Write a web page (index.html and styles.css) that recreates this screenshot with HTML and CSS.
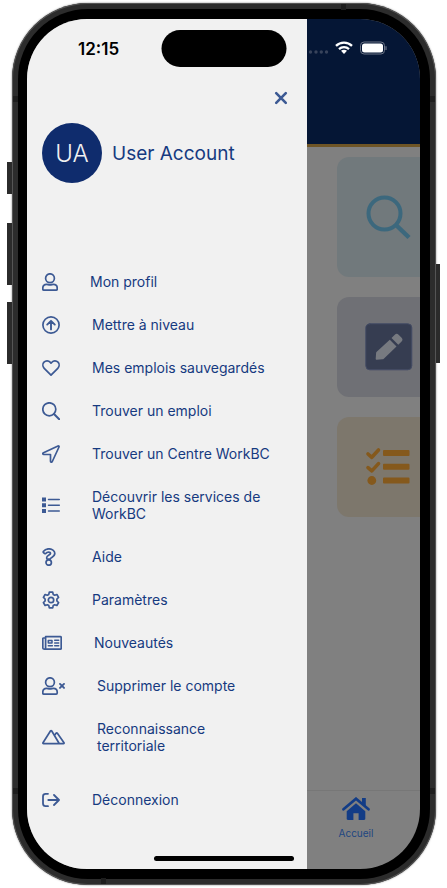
FILE: index.html
```html
<!DOCTYPE html>
<html lang="fr">
<head>
<meta charset="utf-8">
<meta name="viewport" content="width=device-width, initial-scale=1">
<title>WorkBC</title>
<link rel="stylesheet" href="styles.css">
</head>
<body>
<div class="phone">
  <span class="key key-action"></span>
  <span class="key key-up"></span>
  <span class="key key-down"></span>
  <span class="key key-power"></span>
  <span class="band band-left-top"></span>
  <span class="band band-left-bottom"></span>
  <span class="band band-right-top"></span>
  <span class="band band-right-bottom"></span>
  <span class="band band-top"></span>
  <span class="band band-bottom"></span>
  <div class="bezel">
    <div class="screen">
      <aside class="drawer">
        <div class="time">12:15</div>
        <button class="close" type="button" aria-label="Fermer">
          <svg width="14" height="14" viewBox="0 0 14 14"><path d="M2.2 2.2l9.6 9.6M11.8 2.2l-9.6 9.6" stroke-width="2.6"/></svg>
        </button>
        <div class="account">
          <span class="avatar">UA</span>
          <span class="name">User Account</span>
        </div>
        <nav class="menu">
          <a href="#profil"><svg width="16" height="18" viewBox="0 0 16 18"><circle cx="8" cy="5.2" r="4.4"/><path d="M4.6 11.3C2.2 11.3.8 12.9.8 15v1.100c0 .6.4 1 1 1h12.400c.6 0 1-.4 1-1V15c0-2.100-1.400-3.700-3.800-3.700-1.300 0-1.800.6-3.400.6s-2.100-.6-3.400-.6z"/></svg><span>Mon profil</span></a>
          <a href="#niveau"><svg width="18" height="18" viewBox="0 0 18 18"><circle cx="9" cy="9" r="8.1"/><path d="M9 13.4V5M5.2 8.6L9 4.8l3.8 3.8" stroke-width="1.9"/></svg><span>Mettre à niveau</span></a>
          <a href="#sauvegardes"><svg width="18" height="18" viewBox="0 0 18 18"><path d="M9 16.2L2.2 9.3C.5 7.500.5 4.700 2 3.200 3.800 1.400 6.600 1.600 8.100 3.200L9 4.200l.9-1c1.500-1.600 4.300-1.800 6.100 0 1.500 1.500 1.500 4.300-.2 6.100z"/></svg><span>Mes emplois sauvegardés</span></a>
          <a href="#emploi"><svg width="18" height="18" viewBox="0 0 18 18"><circle cx="7.300" cy="7.300" r="6.500"/><path d="M12 12l5.200 5.200" stroke-width="2"/></svg><span>Trouver un emploi</span></a>
          <a href="#centre"><svg width="18" height="18" viewBox="0 0 18 18"><path d="M16 1L1.500 7.700c-1.100.5-.8 1.800.3 1.800h6.700v6.700c0 1.100 1.400 1.400 1.800.3L17 2c.3-.7-.3-1.300-1-1z"/></svg><span>Trouver un Centre WorkBC</span></a>
          <a href="#services"><svg width="18" height="18" viewBox="0 0 18 18"><path class="solid" d="M0 1.500h4v4H0zM0 7.200h4v4H0zM0 13h4v4H0z"/><path d="M6.500 3.500h10.800M6.500 9.200h10.800M6.500 15h10.800" stroke-width="1.500"/></svg><span>Découvrir les services de WorkBC</span></a>
          <a href="#aide"><svg width="18" height="18" viewBox="0 0 18 18"><path d="M6.900.8C4.400.8 2.600 1.900 1.300 3.600c-.2.300-.2.700.1.900l1.300 1.100c.3.200.6.200.9 0 .9-.9 1.700-1.400 2.900-1.400 1.100 0 2 .6 2 1.400 0 .7-.6 1-1.600 1.500C5.600 7.800 4.600 8.500 4.600 10c0 .7.4 1.200 1 1.200h2.100c.6 0 .9-.4 1-.9.300-1 4.100-1.300 4.100-5C12.800 2.700 9.900.8 6.900.8z"/><circle cx="6.700" cy="14.500" r="2.700"/></svg><span>Aide</span></a>
          <a href="#parametres"><svg width="18" height="18" viewBox="0 0 18 18"><circle cx="9" cy="9" r="2.700"/><path d="M7.300 1.100h3.400l.5 2.300 1.500.8 2.200-.7 1.700 2.900-1.700 1.600v2l1.700 1.600-1.700 2.900-2.200-.7-1.500.8-.5 2.300H7.300l-.5-2.300-1.500-.8-2.200.7-1.700-2.900 1.700-1.600V8L1.400 6.400l1.700-2.900 2.200.7 1.500-.8z"/></svg><span>Paramètres</span></a>
          <a href="#nouveautes"><svg width="20" height="18" viewBox="0 0 20 18"><path d="M3.600 2.700h14.800c.5 0 .8.300.8.800v10.900c0 .5-.3.800-.8.800H2.300c-.9 0-1.500-.6-1.500-1.500V4.800c0-.5.300-.8.800-.8h2M3.600 2.700v11c0 .8-.5 1.500-1.300 1.500"/><path d="M6.300 6.500h3.700v2.500H6.300zM6.300 11.800h4.100M12.700 6.300h4M12.700 9.100h4M12.700 11.800h4" stroke-width="1.500"/></svg><span>Nouveautés</span></a>
          <a href="#supprimer"><svg width="23" height="18" viewBox="0 0 23 18"><circle cx="8" cy="5.200" r="4.400"/><path d="M4.600 11.300C2.200 11.300.8 12.900.8 15v1.100c0 .6.400 1 1 1h12.400c.6 0 1-.4 1-1V15c0-2.100-1.400-3.700-3.800-3.700-1.300 0-1.800.6-3.400.6s-2.100-.6-3.400-.6z"/><path d="M18 6.900l4 4M22 6.900l-4 4" stroke-width="1.900"/></svg><span>Supprimer le compte</span></a>
          <a href="#territoire"><svg width="23" height="18" viewBox="0 0 23 18"><path d="M8.600 2.800L1 14.700c-.3.500 0 1 .5 1h20c.5 0 .8-.5.500-1L15.200 5.100c-.3-.4-.7-.4-1 0l-1.700 2.300M8.600 2.800c.3-.4.700-.4 1 0l7.600 12.700"/></svg><span>Reconnaissance territoriale</span></a>
          <a class="logout" href="#deconnexion"><svg width="18" height="18" viewBox="0 0 18 18"><path d="M6 2.800H3.600C2 2.800 1 3.800 1 5.400v7.200c0 1.600 1 2.600 2.600 2.600H6M6.300 9h10.500M12 4l5 5-5 5" stroke-width="1.800"/></svg><span>Déconnexion</span></a>
        </nav>
      </aside>
      <main class="page">
        <header class="topbar">
          <svg class="status" width="80" height="14" viewBox="0 0 80 14">
            <g fill="#38435b"><circle cx="3.500" cy="11" r="1.700"/><circle cx="9" cy="11" r="1.700"/><circle cx="14.300" cy="11" r="1.700"/><circle cx="19.500" cy="11" r="1.700"/></g>
            <path d="M29 4.900c4.400-4.300 11.600-4.300 16 0M32 8.100c2.800-2.600 7.200-2.600 10 0" fill="none" stroke="#fff" stroke-width="2.300"/>
            <path d="M34 9.800c1.900-1.500 4.100-1.500 6 0L37 13z" fill="#fff"/>
            <rect x="53.500" y="1" width="24" height="12" rx="3.600" fill="none" stroke="#6d7587"/>
            <rect x="55" y="2.500" width="21" height="9" rx="2.500" fill="#fff"/>
            <path d="M79 5.300v3.600" stroke="#6d7587" stroke-width="1.200"/>
          </svg>
        </header>
        <div class="cards">
          <section class="card card-search"><svg width="46" height="46" viewBox="0 0 46 46"><circle cx="19.500" cy="19.500" r="16" stroke-width="4"/><path d="M31.500 31.500L44 43.500" stroke-width="4.500" stroke-linecap="butt"/></svg></section>
          <section class="card card-edit"><svg width="48" height="48" viewBox="0 0 48 48"><rect class="tile" x=".8" y=".8" width="46" height="46" rx="4"/><path class="pen" d="M24.800 16.700l6.700 6.700-12.700 12.300c-.4.400-.8.600-1.300.6l-5.800.4c-.6 0-1-.4-1-1l.4-5.700c0-.5.300-1 .6-1.300zM26.500 15l3.300-3.300c1.200-1.200 2.600-1.200 3.800 0l3 3c1.200 1.200 1.200 2.600 0 3.800l-3.300 3.300z"/></svg></section>
          <section class="card card-tasks"><svg width="46" height="40" viewBox="0 0 46 40"><path d="M3 7l3.800 3.300 6.700-7.300M3 20.600l3.800 3.300 6.700-7.300" stroke-width="3.600"/><circle class="dot" cx="6.800" cy="33.500" r="4.400"/><path class="dot" d="M19 3h24.500q1 0 1 1v4q0 1-1 1H19q-1 0-1-1V4q0-1 1-1zM19 16.700h24.500q1 0 1 1v4q0 1-1 1H19q-1 0-1-1v-4q0-1 1-1zM19 30.500h24.500q1 0 1 1v4q0 1-1 1H19q-1 0-1-1v-4q0-1 1-1z"/></svg></section>
        </div>
        <nav class="tabs">
          <a class="tab" href="#accueil"><svg width="28" height="24" viewBox="0 0 28 24"><path d="M1.500 12.300L14 1.700l12.500 10.600" fill="none" stroke="#123c86" stroke-width="2.700" stroke-linecap="round"/><path d="M20 .9h3.800v8.600L20 6.300zM14 6.200l9.300 8v7.500c0 .7-.5 1.200-1.200 1.200h-5.500v-6.700h-5.200v6.700H5.900c-.7 0-1.200-.5-1.200-1.200v-7.500z" fill="#123c86"/></svg><span>Accueil</span></a>
        </nav>
      </main>
      <span class="island"></span>
      <span class="home-indicator"></span>
    </div>
  </div>
</div>
</body>
</html>
```
FILE: styles.css
```css
* { box-sizing: border-box; }
body {
  margin: 0;
  background: #fff;
  font-family: Inter, "Liberation Sans", sans-serif;
  color: #163a80;
}
a { color: inherit; text-decoration: none; }

.phone {
  position: relative;
  display: flex;
  min-height: calc(100vh - 7px);
  margin: 3px 11px 4px 12px;
  padding: 6px;
  border-radius: 76px;
  background: #2c2c2c;
  box-shadow: inset 0 0 0 1px #555, 0 0 2px #777;
}
.bezel {
  display: flex;
  flex: 1;
  padding: 10px 10px 10px 9px;
  border-radius: 70px;
  background: #000;
}
.screen {
  position: relative;
  display: flex;
  flex: 1;
  overflow: hidden;
  border-radius: 60px;
  background: #808080;
}

.key { position: absolute; width: 5px; background: #2b2b2b; }
.key-action { left: -5px; top: 159px; height: 32px; }
.key-up { left: -5px; top: 220px; height: 62px; }
.key-down { left: -5px; top: 299px; height: 62px; }
.key-power { right: -4px; top: 261px; width: 4px; height: 99px; }
.band { position: absolute; width: 5px; height: 6px; background: #1d1d1d; }
.band-left-top { left: 1px; top: 93px; }
.band-left-bottom { left: 1px; bottom: 91px; }
.band-right-top { right: 1px; top: 93px; }
.band-right-bottom { right: 1px; bottom: 91px; }
.band-top { right: 90px; top: 1px; }
.band-bottom { left: 89px; bottom: 1px; }

.drawer {
  display: flex;
  flex: none;
  flex-direction: column;
  width: 280px;
  padding: 20px 16px 48px 15px;
  background: #f1f1f1;
}
.time {
  padding-left: 36px;
  color: #000;
  font-size: 17px;
  font-weight: 600;
  line-height: 20px;
}
.close {
  display: flex;
  align-self: flex-end;
  align-items: center;
  justify-content: center;
  width: 20px;
  height: 20px;
  margin-top: 29px;
  padding: 0;
  border: 0;
  background: none;
}
.drawer svg {
  flex: none;
  fill: none;
  stroke: #3d5a94;
  stroke-width: 1.7;
  stroke-linecap: round;
  stroke-linejoin: round;
}
.drawer .solid { fill: #3d5a94; stroke: none; }
.account {
  display: flex;
  align-items: center;
  gap: 10px;
  margin-top: 15px;
}
.avatar {
  display: flex;
  align-items: center;
  justify-content: center;
  width: 60px;
  height: 60px;
  border-radius: 50%;
  background: #0f2c6d;
  color: #f1f1f1;
  font-size: 24px;
  font-weight: 300;
}
.name { font-size: 19px; }
.menu {
  margin-top: 77px;
  padding-right: 20px;
  font-size: 14px;
  line-height: 17px;
}
.menu a {
  display: flex;
  align-items: center;
  gap: 32px;
  padding: 13px 0;
}
.menu svg { margin: -1px 0; }
.menu .logout { margin-top: 11px; }

.page {
  display: flex;
  flex: 1;
  flex-direction: column;
  min-width: 0;
}
.topbar {
  height: 128px;
  padding-top: 22px;
  border-bottom: 3px solid #6f5526;
  background: #051635;
}
.status { display: block; }
.cards {
  display: flex;
  flex: 1;
  flex-direction: column;
  gap: 20px;
  padding: 10px 0 20px 30px;
}
.card {
  display: flex;
  align-items: center;
  height: 100px;
  padding-left: 28px;
  border-radius: 12px 0 0 12px;
}
.card svg {
  flex: none;
  fill: none;
  stroke-linecap: round;
  stroke-linejoin: round;
}
.card-search { height: 120px; background: #71797c; stroke: #3c687d; }
.card-edit { background: #6f7075; }
.card-tasks { background: #7d776c; stroke: #85591c; }
.tile { fill: #363d51; stroke: #444c65; }
.pen { fill: #777a80; }
.dot { fill: #85591c; stroke: none; }
.tabs {
  display: flex;
  height: 79px;
  padding-top: 6px;
  border-top: 1px solid #777;
}
.tab {
  display: flex;
  flex-direction: column;
  align-items: center;
  gap: 6px;
  width: 98px;
  color: #214681;
  font-size: 10px;
  line-height: 12px;
}

.island {
  position: absolute;
  top: 11px;
  left: 50%;
  width: 125px;
  height: 37px;
  border-radius: 19px;
  background: #000;
  transform: translateX(-50%);
}
.home-indicator {
  position: absolute;
  bottom: 8px;
  left: 50%;
  width: 140px;
  height: 5px;
  border-radius: 3px;
  background: #000;
  transform: translateX(-50%);
}
```
